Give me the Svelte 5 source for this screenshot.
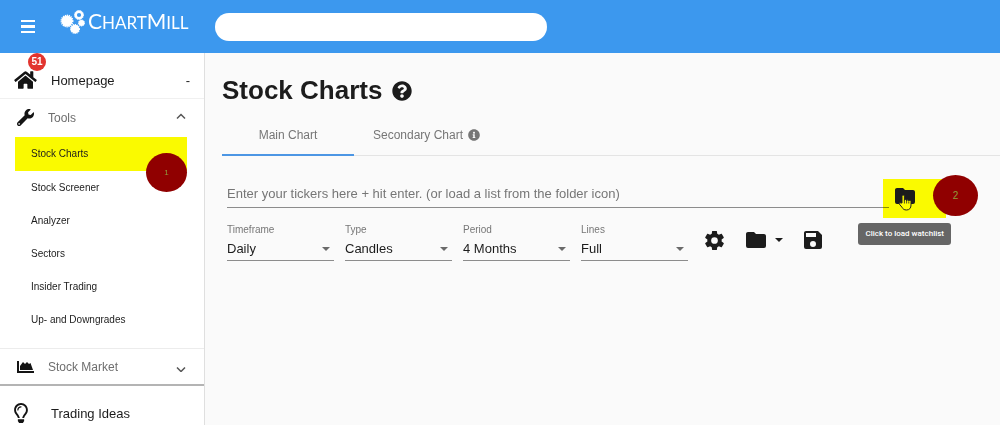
<script>
	const tools = ['Stock Charts', 'Stock Screener', 'Analyzer', 'Sectors', 'Insider Trading', 'Up- and Downgrades'];
	const filters = [
		{ id: 'timeframe', label: 'Timeframe', options: ['Daily', 'Weekly', 'Monthly'] },
		{ id: 'type',      label: 'Type',      options: ['Candles', 'Bars', 'Line'] },
		{ id: 'period',    label: 'Period',    options: ['4 Months', '6 Months', '1 Year'] },
		{ id: 'lines',     label: 'Lines',     options: ['Full', 'None'] },
	];
	const folder = 'M10,4H4C2.89,4 2,4.89 2,6V18A2,2 0 0,0 4,20H20A2,2 0 0,0 22,18V8C22,6.89 21.1,6 20,6H12L10,4Z';
	let active = 'Stock Charts';
	let tab = 'main';
	let tickers = '';
	let search = '';
</script>

<style>
	:global(body) {
		background: #fafafa;
	}
	.app {
		font-family: "Liberation Sans", Arial, sans-serif;
		color: #1c1c1c;
	}
	button, input, select {
		font-family: inherit;
		margin: 0;
		padding: 0;
		border: 0;
		background: none;
		color: inherit;
		outline: none;
	}
	button {
		cursor: pointer;
	}
	svg {
		display: block;
		fill: currentColor;
	}
	a {
		color: inherit;
		text-decoration: none;
	}

	header {
		display: flex;
		align-items: center;
		height: 53px;
		padding-left: 21px;
		background: #3c98ee;
		color: #fff;
	}
	.logo {
		display: flex;
		align-items: center;
		width: 155px;
		margin-left: 25px;
		padding-bottom: 10px;
		font-family: Lato, sans-serif;
		font-size: 17px;
		line-height: 24px;
	}
	.logo svg {
		margin-right: 3px;
	}
	.logo b {
		font-size: 21px;
		font-weight: 400;
	}
	.search {
		width: 332px;
		height: 28px;
		box-sizing: border-box;
		padding: 0 14px;
		border-radius: 14px;
		background: #fff;
		color: #1c1c1c;
	}

	.body {
		display: flex;
		align-items: stretch;
	}
	nav {
		flex: none;
		width: 204px;
		background: #fff;
		border-right: 1px solid #dfdfdf;
	}
	.row {
		display: flex;
		align-items: center;
		width: 100%;
		box-sizing: border-box;
		height: 37px;
		padding: 0 18px 0 17px;
		color: #6e6e6e;
		font-size: 12px;
		text-align: left;
	}
	.row span {
		flex: 1;
	}
	.row svg:first-child {
		width: 17px;
		margin-right: 14px;
		color: #141414;
	}
	.row.top {
		height: 46px;
		padding: 9px 14px 0;
		border-bottom: 1px solid #f0f0f0;
		color: #1c1c1c;
		font-size: 13px;
	}
	.row.top .icon {
		flex: none;
		position: relative;
		width: 23px;
		margin-right: 14px;
	}
	.row.top .icon svg {
		width: auto;
		margin: 0;
	}
	.row.market {
		height: 38px;
		border-top: 1px solid #ececec;
		border-bottom: 2px solid #b4b4b4;
	}
	.badge {
		position: absolute;
		left: 14px;
		top: -17px;
		width: 18px;
		height: 18px;
		border-radius: 50%;
		background: #e2352f;
		color: #fff;
		font-size: 10px;
		font-weight: bold;
		line-height: 18px;
		text-align: center;
	}
	nav ul {
		margin: 0;
		padding: 1px 17px 12px 15px;
		list-style: none;
	}
	nav li {
		position: relative;
	}
	nav li a {
		display: block;
		padding-left: 16px;
		font-size: 10px;
		line-height: 33px;
	}
	nav li.active {
		background: #fafa00;
	}
	nav li.active a {
		line-height: 34px;
	}
	.step {
		position: absolute;
		display: flex;
		align-items: center;
		justify-content: center;
		border-radius: 50%;
		background: #900000;
		color: #8f9a3c;
	}
	.step.one {
		right: 0;
		top: 16px;
		width: 41px;
		height: 39px;
		font-size: 8px;
	}
	.step.two {
		left: 50px;
		top: -4px;
		width: 45px;
		height: 41px;
		font-size: 10px;
	}

	main {
		flex: 1;
		padding: 21px 0 0 17px;
	}
	h1 {
		display: flex;
		align-items: center;
		gap: 10px;
		margin: 0;
		font-size: 26px;
		line-height: 32px;
	}
	h1 svg {
		margin-top: 2px;
	}
	.tabs {
		display: flex;
		height: 49px;
		border-bottom: 1px solid #e4e4e4;
	}
	.tabs button {
		display: flex;
		align-items: center;
		justify-content: center;
		gap: 5px;
		width: 132px;
		box-sizing: border-box;
		height: 50px;
		padding-top: 10px;
		border-bottom: 2px solid transparent;
		color: #767676;
		font-size: 12px;
	}
	.tabs button + button {
		width: 145px;
	}
	.tabs button.active {
		border-color: #4c96e4;
	}
	.tickers {
		display: flex;
		align-items: flex-start;
		margin: 23px 54px 0 5px;
	}
	.tickers input {
		flex: 1;
		height: 28px;
		border-bottom: 1px solid #8c8c8c;
		font-size: 13px;
	}
	.tickers input::placeholder {
		color: #767676;
		opacity: 1;
	}
	.load {
		position: relative;
		margin-left: -6px;
	}
	.load button {
		display: block;
		width: 63px;
		height: 39px;
		padding: 0 0 5px 10px;
		background: #ff0;
		mix-blend-mode: multiply;
	}
	.hand {
		position: absolute;
		left: 15px;
		top: 15px;
	}
	.tooltip {
		position: absolute;
		right: -5px;
		top: 44px;
		padding: 0 7px;
		border-radius: 3px;
		background: #666;
		color: #fff;
		font-family: Roboto, sans-serif;
		font-size: 8px;
		font-weight: 500;
		line-height: 22px;
		white-space: nowrap;
	}
	.filters {
		display: flex;
		align-items: flex-start;
		gap: 11px;
		padding: 5px 5px 0;
	}
	.field {
		position: relative;
		width: 107px;
	}
	.field label {
		display: block;
		color: #777;
		font-size: 10px;
		line-height: 14px;
	}
	.field select {
		display: block;
		width: 100%;
		height: 24px;
		border-bottom: 1px solid #8c8c8c;
		appearance: none;
		font-size: 13px;
	}
	.field svg {
		position: absolute;
		right: 4px;
		bottom: 10px;
		color: #6a6a6a;
		pointer-events: none;
	}
	.actions {
		display: flex;
		align-items: center;
		gap: 18px;
		padding: 5px 0 0 4px;
	}
	.actions button {
		display: flex;
		align-items: center;
		gap: 7px;
	}
</style>

<div class="app">
	<header>
		<button aria-label="Menu">
			<svg width="14" height="13" viewBox="0 0 14 13"><path d="M0 0h14v2H0zM0 5h14v3H0zM0 11h14v2H0z" /></svg>
		</button>
		<a class="logo" href="#home">
			<svg width="25" height="26" viewBox="0 0 25 26">
				<circle cx="7" cy="12" r="5.5" />
				<circle cx="7" cy="12" r="5.7" fill="none" stroke="#fff" stroke-width="1.5" stroke-dasharray="1.2 .8" />
				<circle cx="19" cy="6" r="3.3" fill="none" stroke="#fff" stroke-width="2.4" />
				<circle cx="19" cy="6" r="4.5" fill="none" stroke="#fff" stroke-dasharray="1.2 .8" />
				<circle cx="21.500" cy="14" r="3" />
				<circle cx="21.500" cy="14" r="3" fill="none" stroke="#fff" stroke-dasharray="1.2 .8" />
				<circle cx="15" cy="20" r="4.3" />
				<circle cx="15" cy="20" r="4.4" fill="none" stroke="#fff" stroke-width="1.2" stroke-dasharray="1.2 .8" />
			</svg>
			<span><b>C</b>HART<b>M</b>ILL</span>
		</a>
		<input class="search" type="search" aria-label="Search" bind:value={search}>
	</header>

	<div class="body">
		<nav>
			<a class="row top" href="#home">
				<div class="icon">
					<svg width="23" height="20" viewBox="0 0 576 512"><path d="M280.37 148.26L96 300.11V464a16 16 0 0 0 16 16l112.06-.29a16 16 0 0 0 15.92-16V368a16 16 0 0 1 16-16h64a16 16 0 0 1 16 16v95.64a16 16 0 0 0 16 16.05L464 480a16 16 0 0 0 16-16V300L295.67 148.26a12.19 12.19 0 0 0-15.3 0zM571.6 251.47L488 182.56V44.05a12 12 0 0 0-12-12h-56a12 12 0 0 0-12 12v72.61L318.47 43a48 48 0 0 0-61 0L4.34 251.47a12 12 0 0 0-1.6 16.9l25.5 31A12 12 0 0 0 45.15 301l235.22-193.74a12.19 12.19 0 0 1 15.3 0L530.9 301a12 12 0 0 0 16.9-1.6l25.5-31a12 12 0 0 0-1.7-16.93z" /></svg>
					<div class="badge">51</div>
				</div>
				<span>Homepage</span>
				-
			</a>
			<button class="row">
				<svg width="17" height="17" viewBox="0 0 512 512"><path d="M507.73 109.1c-2.24-9.03-13.54-12.09-20.12-5.51l-74.36 74.36-67.88-11.31-11.31-67.88 74.36-74.36c6.62-6.62 3.43-17.9-5.66-20.16-47.38-11.74-99.55.91-136.58 37.93-39.64 39.64-50.55 97.1-34.05 147.2L18.74 402.76c-24.99 24.99-24.99 65.51 0 90.5 24.99 24.99 65.51 24.99 90.5 0l213.21-213.21c50.12 16.71 107.47 5.68 147.37-34.22 37.07-37.07 49.7-89.32 37.91-136.73zM64 472c-13.25 0-24-10.75-24-24 0-13.26 10.75-24 24-24s24 10.74 24 24c0 13.25-10.75 24-24 24z" /></svg>
				<span>Tools</span>
				<svg width="10" height="10" viewBox="0 0 10 10"><path d="M1 5.5L5 1.5L9 5.5" fill="none" stroke="#555" stroke-width="1.5" /></svg>
			</button>
			<ul>
				{#each tools as tool, i}
					<li class:active={tool === active}>
						<a href="#tools" on:click={() => active = tool}>{tool}</a>
						{#if i === 0}
							<div class="step one">1</div>
						{/if}
					</li>
				{/each}
			</ul>
			<button class="row market">
				<svg width="17" height="14" viewBox="0 0 17 14"><path d="M0 1h2v10h15v2H0zM3 10V6L6 2L8 4L10 2L12 4L13.5 3L16 10z" /></svg>
				<span>Stock Market</span>
				<svg width="10" height="10" viewBox="0 0 10 10"><path d="M1 5.5L5 9.5L9 5.5" fill="none" stroke="#555" stroke-width="1.5" /></svg>
			</button>
			<a class="row top" href="#ideas">
				<div class="icon">
					<svg width="14" height="20" viewBox="0 0 352 512"><path d="M176 80c-52.94 0-96 43.06-96 96 0 8.84 7.16 16 16 16s16-7.16 16-16c0-35.3 28.72-64 64-64 8.84 0 16-7.16 16-16s-7.16-16-16-16zM96.06 459.17c0 3.15.93 6.22 2.68 8.84l24.51 36.84c2.97 4.46 7.97 7.14 13.32 7.14h78.85c5.36 0 10.36-2.68 13.32-7.14l24.51-36.84c1.74-2.62 2.67-5.7 2.68-8.84l.05-43.18H96.02l.04 43.18zM176 0C73.72 0 0 82.97 0 176c0 44.37 16.45 84.85 43.56 115.78 16.64 18.99 42.74 58.8 52.42 92.16v.06h48v-.12c-.01-4.77-.72-9.51-2.15-14.07-5.59-17.81-22.82-64.77-62.17-109.67-20.54-23.43-31.52-53.15-31.61-84.14-.2-73.64 59.67-128 127.95-128 70.58 0 128 57.42 128 128 0 30.97-11.24 60.85-31.65 84.14-39.11 44.61-56.42 91.47-62.1 109.46a47.507 47.507 0 0 0-2.22 14.3v.1h48v-.05c9.68-33.37 35.78-73.18 52.42-92.16C335.55 260.85 352 220.37 352 176 352 78.8 273.2 0 176 0z" /></svg>
				</div>
				<span>Trading Ideas</span>
			</a>
		</nav>

		<main>
			<h1>
				Stock Charts
				<svg width="20" height="20" viewBox="0 0 512 512"><path d="M504 256c0 136.997-111.043 248-248 248S8 392.997 8 256C8 119.083 119.043 8 256 8s248 111.083 248 248zM262.655 90c-54.497 0-89.255 22.957-116.549 63.758-3.536 5.286-2.353 12.415 2.715 16.258l34.699 26.31c5.205 3.947 12.621 3.008 16.665-2.122 17.864-22.658 30.113-35.797 57.303-35.797 20.429 0 45.698 13.148 45.698 32.958 0 14.976-12.363 22.667-32.534 33.976C247.128 238.528 216 254.941 216 296v4c0 6.627 5.373 12 12 12h56c6.627 0 12-5.373 12-12v-1.333c0-28.462 83.186-29.647 83.186-106.667 0-58.002-60.165-102-116.531-102zM256 338c-25.365 0-46 20.635-46 46 0 25.364 20.635 46 46 46s46-20.636 46-46c0-25.365-20.635-46-46-46z" /></svg>
			</h1>

			<div class="tabs">
				<button class:active={tab === 'main'} on:click={() => tab = 'main'}>Main Chart</button>
				<button class:active={tab === 'secondary'} on:click={() => tab = 'secondary'}>
					Secondary Chart
					<svg width="12" height="12" viewBox="0 0 512 512"><path d="M256 8C119.043 8 8 119.083 8 256c0 136.997 111.043 248 248 248s248-111.003 248-248C504 119.083 392.957 8 256 8zm0 110c23.196 0 42 18.804 42 42s-18.804 42-42 42-42-18.804-42-42 18.804-42 42-42zm56 254c0 6.627-5.373 12-12 12h-88c-6.627 0-12-5.373-12-12v-24c0-6.627 5.373-12 12-12h12v-64h-12c-6.627 0-12-5.373-12-12v-24c0-6.627 5.373-12 12-12h64c6.627 0 12 5.373 12 12v100h12c6.627 0 12 5.373 12 12v24z" /></svg>
				</button>
			</div>

			<div class="tickers">
				<input type="text" aria-label="Tickers" placeholder="Enter your tickers here + hit enter. (or load a list from the folder icon)" bind:value={tickers}>
				<div class="load">
					<button aria-label="Load watchlist">
						<svg width="24" height="24" viewBox="0 0 24 24"><path d={folder} /></svg>
					</button>
					<svg class="hand" width="14" height="17" viewBox="0 0 14 17">
						<path d="M4 9V2.2a1.2 1.2 0 0 1 2.4 0V6.500a1.1 1.1 0 0 1 2.2.3 1.1 1.1 0 0 1 2.2.3 1.1 1.1 0 0 1 2.2.5V11c0 3-1.500 5-4.500 5-2.500 0-3.500-1-4.500-2.700L1.300 10c-.5-1 .8-1.700 1.500-1z" fill="#ff0" stroke="#222" />
						<path d="M6.400 6.500v3M8.600 7v2.500M10.800 7.500v2" fill="none" stroke="#222" stroke-width=".8" />
					</svg>
					<div class="step two">2</div>
					<div class="tooltip" role="tooltip">Click to load watchlist</div>
				</div>
			</div>

			<div class="filters">
				{#each filters as { id, label, options }}
					<div class="field">
						<label for={id}>{label}</label>
						<select {id}>
							{#each options as option}
								<option>{option}</option>
							{/each}
						</select>
						<svg width="8" height="4" viewBox="0 0 8 4"><path d="M0 0h8L4 4z" /></svg>
					</div>
				{/each}
				<div class="actions">
					<button aria-label="Settings">
						<svg width="23" height="23" viewBox="0 0 24 24"><path d="M12,15.5A3.5,3.5 0 0,1 8.5,12A3.5,3.5 0 0,1 12,8.5A3.5,3.5 0 0,1 15.5,12A3.5,3.5 0 0,1 12,15.5M19.43,12.97C19.47,12.65 19.5,12.33 19.5,12C19.5,11.67 19.47,11.34 19.43,11L21.54,9.37C21.73,9.22 21.78,8.95 21.66,8.73L19.66,5.27C19.54,5.05 19.27,4.96 19.05,5.05L16.56,6.05C16.04,5.66 15.5,5.32 14.87,5.07L14.5,2.42C14.46,2.18 14.25,2 14,2H10C9.75,2 9.54,2.18 9.5,2.42L9.13,5.07C8.5,5.32 7.96,5.66 7.44,6.05L4.95,5.05C4.73,4.96 4.46,5.05 4.34,5.27L2.34,8.73C2.21,8.95 2.27,9.22 2.46,9.37L4.57,11C4.53,11.34 4.5,11.67 4.5,12C4.5,12.33 4.53,12.65 4.57,12.97L2.46,14.63C2.27,14.78 2.21,15.05 2.34,15.27L4.34,18.73C4.46,18.95 4.73,19.03 4.95,18.95L7.44,17.94C7.96,18.34 8.5,18.68 9.13,18.93L9.5,21.58C9.54,21.82 9.75,22 10,22H14C14.25,22 14.46,21.82 14.5,21.58L14.87,18.93C15.5,18.67 16.04,18.34 16.56,17.94L19.05,18.95C19.27,19.03 19.54,18.95 19.66,18.73L21.66,15.27C21.78,15.05 21.73,14.78 21.54,14.63L19.43,12.97Z" /></svg>
					</button>
					<button aria-label="Open">
						<svg width="24" height="24" viewBox="0 0 24 24"><path d={folder} /></svg>
						<svg width="8" height="4" viewBox="0 0 8 4"><path d="M0 0h8L4 4z" /></svg>
					</button>
					<button aria-label="Save">
						<svg width="24" height="24" viewBox="0 0 24 24"><path d="M15,9H5V5H15M12,19A3,3 0 0,1 9,16A3,3 0 0,1 12,13A3,3 0 0,1 15,16A3,3 0 0,1 12,19M17,3H5C3.89,3 3,3.9 3,5V19A2,2 0 0,0 5,21H19A2,2 0 0,0 21,19V7L17,3Z" /></svg>
					</button>
				</div>
			</div>
		</main>
	</div>
</div>
